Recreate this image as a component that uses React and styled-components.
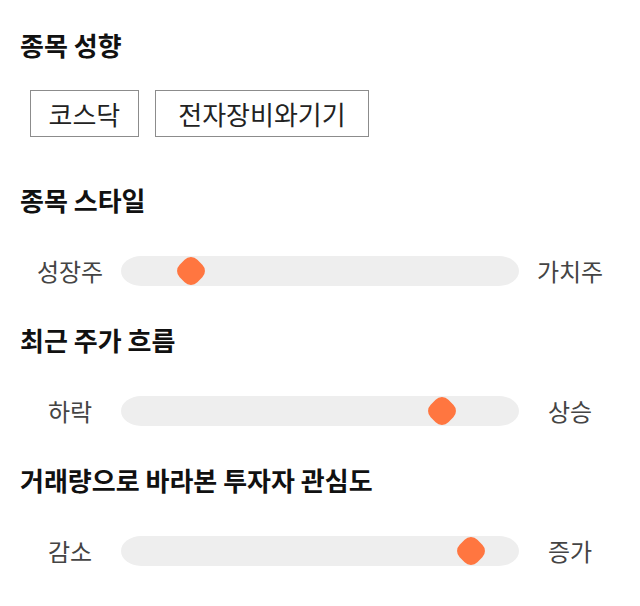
import React from "react";
import styled, { createGlobalStyle } from "styled-components";

const GlobalStyle = createGlobalStyle`
  body {
    margin: 0;
    background: #ffffff;
    font-family: "Noto Sans CJK KR", "Noto Sans", sans-serif;
  }
`;

const tags = [
  { label: "코스닥", pad: 17.5 },
  { label: "전자장비와기기", pad: 22.5 },
];

const sliders = [
  { title: "종목 스타일", left: "성장주", right: "가치주", value: 0.176 },
  { title: "최근 주가 흐름", left: "하락", right: "상승", value: 0.807 },
  { title: "거래량으로 바라본 투자자 관심도", left: "감소", right: "증가", value: 0.879 },
];

function App() {
  return (
    <Page>
      <GlobalStyle />
      <Section>
        <Title>종목 성향</Title>
        <TagRow>
          {tags.map((t) => (
            <Tag key={t.label} $pad={t.pad}>
              {t.label}
            </Tag>
          ))}
        </TagRow>
      </Section>

      {sliders.map((s) => (
        <Section key={s.title}>
          <Title>{s.title}</Title>
          <SliderRow>
            <EndLabel>{s.left}</EndLabel>
            <Track>
              <Thumb style={{ left: `${s.value * 100}%` }} />
            </Track>
            <EndLabel>{s.right}</EndLabel>
          </SliderRow>
        </Section>
      ))}
    </Page>
  );
}

const Page = styled.main`
  display: flex;
  flex-direction: column;
  gap: 38px;
  padding: 29px 20px 0 20px;
`;

const Section = styled.section`
  display: flex;
  flex-direction: column;
`;

const Title = styled.h2`
  margin: 0;
  font-size: 26px;
  line-height: 32px;
  font-weight: 700;
  color: #111111;
  white-space: nowrap;
`;

const TagRow = styled.div`
  display: flex;
  gap: 16px;
  margin: 29px 0 9px 10px;
`;

const Tag = styled.div`
  height: 47px;
  box-sizing: border-box;
  padding: 0 ${(p) => p.$pad}px;
  display: flex;
  align-items: center;
  border: 1px solid #8c8c8c;
  font-size: 26px;
  color: #222222;
  white-space: nowrap;
`;

const SliderRow = styled.div`
  display: grid;
  grid-template-columns: 84px 1fr 84px;
  column-gap: 9px;
  align-items: center;
  margin: 40px 8px 0 8px;
`;

const EndLabel = styled.span`
  text-align: center;
  font-size: 24px;
  line-height: 30px;
  color: #444444;
  white-space: nowrap;
`;

const Track = styled.div`
  position: relative;
  height: 30px;
  background: #eeeeee;
  border-radius: 20px / 15px;
`;

const Thumb = styled.div`
  position: absolute;
  top: 50%;
  width: 25px;
  height: 25px;
  border-radius: 9px;
  background: #ff7640;
  transform: translate(-50%, -50%) rotate(45deg);
`;

export default App;
